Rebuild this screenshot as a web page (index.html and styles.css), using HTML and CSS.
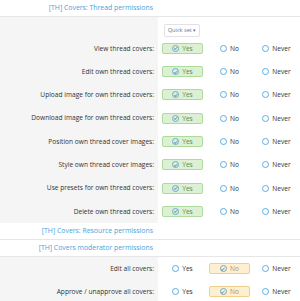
FILE: index.html
```html
<!DOCTYPE html>
<html lang="en">

<head>
    <meta charset="UTF-8">
    <meta name="viewport" content="width=device-width, initial-scale=1.0">
    <title>Permissions</title>
    <link rel="stylesheet" href="styles.css">
</head>

<body>
    <div class="block">
        <h3 class="group-header"><span>[TH] Covers: Thread permissions</span></h3>

        <div class="row quick-row">
            <div class="label"></div>
            <div class="input">
                <button class="quick-set">Quick set <span class="caret">&#9662;</span></button>
            </div>
        </div>

        <div class="row">
            <div class="label">View thread covers:</div>
            <div class="input choices">
                <label class="choice yes checked"><i class="icon-check"></i>Yes</label>
                <label class="choice"><i class="radio"></i>No</label>
                <label class="choice"><i class="radio"></i>Never</label>
            </div>
        </div>
        <div class="row">
            <div class="label">Edit own thread covers:</div>
            <div class="input choices">
                <label class="choice yes checked"><i class="icon-check"></i>Yes</label>
                <label class="choice"><i class="radio"></i>No</label>
                <label class="choice"><i class="radio"></i>Never</label>
            </div>
        </div>
        <div class="row">
            <div class="label">Upload image for own thread covers:</div>
            <div class="input choices">
                <label class="choice yes checked"><i class="icon-check"></i>Yes</label>
                <label class="choice"><i class="radio"></i>No</label>
                <label class="choice"><i class="radio"></i>Never</label>
            </div>
        </div>
        <div class="row">
            <div class="label">Download image for own thread covers:</div>
            <div class="input choices">
                <label class="choice yes checked"><i class="icon-check"></i>Yes</label>
                <label class="choice"><i class="radio"></i>No</label>
                <label class="choice"><i class="radio"></i>Never</label>
            </div>
        </div>
        <div class="row">
            <div class="label">Position own thread cover images:</div>
            <div class="input choices">
                <label class="choice yes checked"><i class="icon-check"></i>Yes</label>
                <label class="choice"><i class="radio"></i>No</label>
                <label class="choice"><i class="radio"></i>Never</label>
            </div>
        </div>
        <div class="row">
            <div class="label">Style own thread cover images:</div>
            <div class="input choices">
                <label class="choice yes checked"><i class="icon-check"></i>Yes</label>
                <label class="choice"><i class="radio"></i>No</label>
                <label class="choice"><i class="radio"></i>Never</label>
            </div>
        </div>
        <div class="row">
            <div class="label">Use presets for own thread covers:</div>
            <div class="input choices">
                <label class="choice yes checked"><i class="icon-check"></i>Yes</label>
                <label class="choice"><i class="radio"></i>No</label>
                <label class="choice"><i class="radio"></i>Never</label>
            </div>
        </div>
        <div class="row">
            <div class="label">Delete own thread covers:</div>
            <div class="input choices">
                <label class="choice yes checked"><i class="icon-check"></i>Yes</label>
                <label class="choice"><i class="radio"></i>No</label>
                <label class="choice"><i class="radio"></i>Never</label>
            </div>
        </div>

        <h3 class="group-header"><span>[TH] Covers: Resource permissions</span></h3>
        <h3 class="group-header"><span>[TH] Covers moderator permissions</span></h3>

        <div class="row">
            <div class="label">Edit all covers:</div>
            <div class="input choices">
                <label class="choice"><i class="radio"></i>Yes</label>
                <label class="choice no checked"><i class="icon-check"></i>No</label>
                <label class="choice"><i class="radio"></i>Never</label>
            </div>
        </div>
        <div class="row">
            <div class="label">Approve / unapprove all covers:</div>
            <div class="input choices">
                <label class="choice"><i class="radio"></i>Yes</label>
                <label class="choice no checked"><i class="icon-check"></i>No</label>
                <label class="choice"><i class="radio"></i>Never</label>
            </div>
        </div>
    </div>
</body>
</html>
```

FILE: styles.css
```css
body {
    font-family: "Open Sans", "Noto Sans", sans-serif;
    margin: 0;
    padding: 0;
    background-color: #fff;
    color: #333;
}

.block {
    width: 300px;
}

.group-header {
    display: grid;
    grid-template-columns: 153px 1fr;
    margin: 0;
    height: 16px;
    line-height: 16px;
    font-size: 6.9px;
    font-weight: normal;
    color: #47a2db;
    background-color: #fff;
    border-bottom: 1px solid #e6e6e6;
    text-align: right;
    white-space: nowrap;
}

.row {
    display: grid;
    grid-template-columns: 158px 1fr;
    height: 23.3px;
}

.quick-row {
    height: 19.5px;
}

.label {
    background-color: #f5f5f5;
    text-align: right;
    padding-right: 4px;
    font-size: 6.6px;
    line-height: 23.5px;
    white-space: nowrap;
}

.input {
    padding-left: 4px;
    display: flex;
    align-items: center;
}

.quick-row .input {
    align-items: flex-end;
}

.quick-set {
    font-family: inherit;
    font-size: 5.6px;
    color: #58779a;
    background-color: #fff;
    border: 1px solid #e2e2e2;
    border-radius: 2px;
    width: 36px;
    height: 13px;
    margin-left: 2px;
    padding: 0;
    cursor: pointer;
}

.caret {
    font-size: 5px;
}

.choices {
    gap: 6px;
}

.choice {
    width: 41px;
    height: 11px;
    box-sizing: border-box;
    display: flex;
    align-items: center;
    justify-content: center;
    gap: 3px;
    font-size: 6.6px;
    color: #333;
    border: 1px solid transparent;
    border-radius: 2px;
}

.choice.yes {
    background-color: #dcf0d4;
    border-color: #addb9b;
    color: #5f8a52;
}

.choice.no {
    background-color: #fdefd0;
    border-color: #f0cf8b;
    color: #b0955f;
}

.radio {
    width: 5px;
    height: 5px;
    border: 1px solid #5aaee3;
    border-radius: 50%;
}

.icon-check {
    position: relative;
    width: 5px;
    height: 5px;
    border: 1px solid #74a9cc;
    border-radius: 50%;
}

.icon-check::after {
    content: "";
    position: absolute;
    left: 1.4px;
    top: 0.6px;
    width: 1.4px;
    height: 2.6px;
    border: solid #74a9cc;
    border-width: 0 1px 1px 0;
    transform: rotate(45deg);
}
```
